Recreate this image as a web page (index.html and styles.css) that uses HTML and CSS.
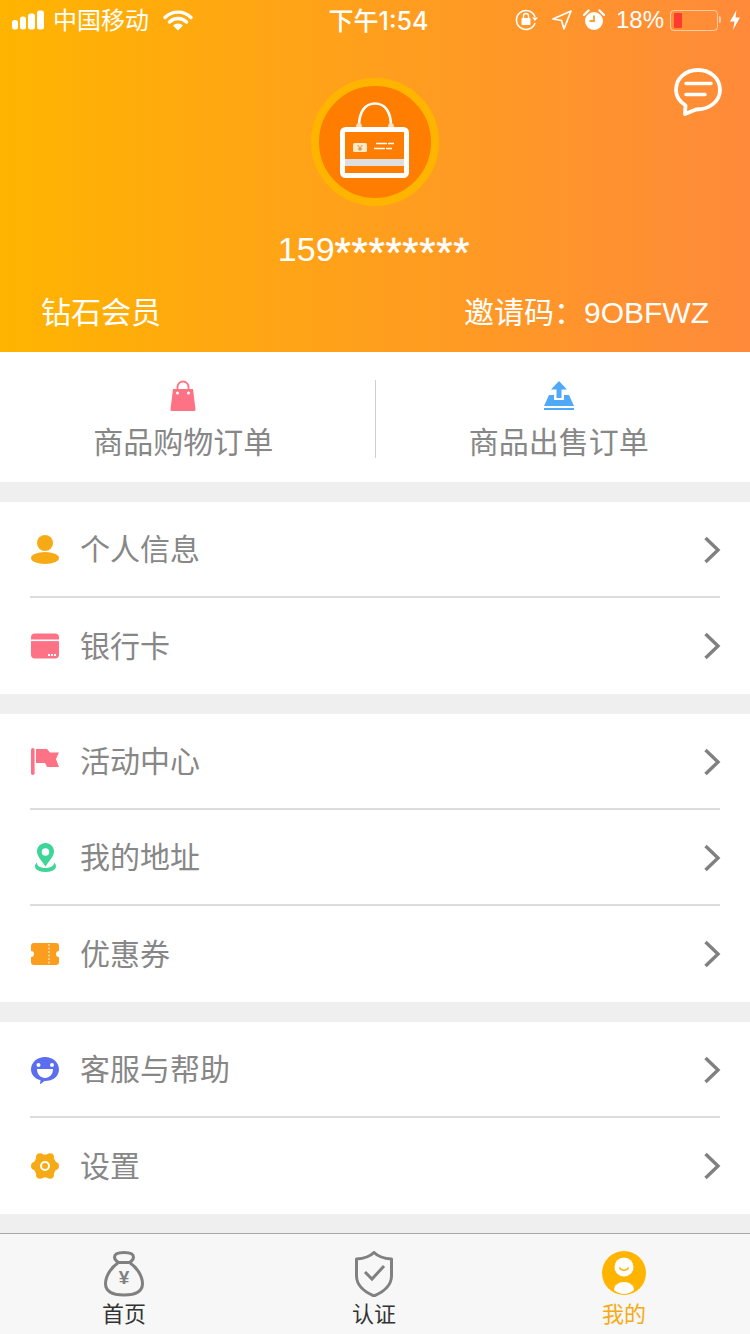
FILE: index.html
```html
<!DOCTYPE html>
<html>
<head>
    <meta charset='utf-8'>
    <title>我的</title>
    <meta name='viewport' content='width=device-width, initial-scale=1'>
    <link rel="stylesheet" href="styles.css">
</head>
<body>
    <header class="head">
        <div class="status">
            <div class="status-left">
                <svg class="signal" width="34" height="20" viewBox="0 0 34 20"><rect x="0" y="10" width="6" height="9.500" rx="2.500"/><rect x="8" y="6.500" width="6" height="13" rx="2.500"/><rect x="16" y="3.500" width="7" height="16" rx="2.500"/><rect x="25" y="0.500" width="7" height="19" rx="2.500"/></svg>
                <span>中国移动</span>
                <svg class="wifi" width="30" height="22" viewBox="0 0 30 22"><path d="M2 8.500a18.500 18.500 0 0 1 26 0M6.500 13a12 12 0 0 1 17 0" fill="none" stroke="#fff" stroke-width="3.400" stroke-linecap="round"/><path d="M10 16.500a7 7 0 0 1 10 0L15 21.500z" fill="#fff"/></svg>
            </div>
            <div class="status-time">下午1:54</div>
            <div class="status-right">
                <svg class="ic-lock" width="24" height="22" viewBox="0 0 24 22"><path d="M20 14a9.500 9.500 0 1 1 0-6" fill="none" stroke="#fff" stroke-width="1.600"/><path d="M17 8.500h6l-3 3.500z" fill="#fff"/><rect x="6.500" y="9" width="9" height="7" rx="1" fill="#fff"/><path d="M8.500 9V7a2.500 2.500 0 0 1 5 0v2" fill="none" stroke="#fff" stroke-width="1.400"/></svg>
                <svg class="ic-arrow" width="22" height="22" viewBox="0 0 22 22"><path d="M20 2 2 10l8.500 1.500L13 20z" fill="none" stroke="#fff" stroke-width="1.700" stroke-linejoin="round"/></svg>
                <svg class="ic-alarm" width="22" height="22" viewBox="0 0 22 22"><circle cx="11" cy="12" r="9" fill="#fff"/><path d="M11 6.500V12H6.500" fill="none" stroke="#fe9e28" stroke-width="1.800"/><path d="M1 6 5.500 1.500M21 6 16.500 1.500" stroke="#fff" stroke-width="2.400" stroke-linecap="round"/></svg>
                <span class="pct">18%</span>
                <div class="battery"><div class="battery-fill"></div></div>
                <svg class="bolt" width="12" height="22" viewBox="0 0 12 22"><path d="M7.500 1 1 12.500H5.500L4 21 11 8.500H6.500z" fill="#fff"/></svg>
            </div>
        </div>

        <svg class="msg-icon" width="48" height="48" viewBox="0 0 48 48"><path d="M11 46 11.500 37.500C5.500 33.500 2 28 2 22 2 10.500 11.500 2 24 2s22 8.500 22 20c0 11-10 19.500-24 19.500z" fill="none" stroke="#fff" stroke-width="3.800" stroke-linejoin="round"/><path d="M12 15.500h25" stroke="#fff" stroke-width="3.400" stroke-linecap="round"/><path d="M12 26.500h19" stroke="#fff" stroke-width="3.400" stroke-linecap="round"/></svg>

        <div class="avatar">
            <svg class="bag-card" width="70" height="76" viewBox="0 0 70 76">
                <path d="M19 24C19 10 25 1.500 35 1.500S51 10 51 24" fill="none" stroke="#fff" stroke-width="2.600"/>
                <circle cx="19" cy="24" r="2.800" fill="#ffe3c4"/><circle cx="51" cy="24" r="2.800" fill="#ffe3c4"/>
                <rect x="2.500" y="27.500" width="64" height="46" rx="3" fill="none" stroke="#fff" stroke-width="5"/>
                <rect x="5" y="57" width="59" height="7" fill="#dedede"/>
                <rect x="13" y="41" width="14" height="9" rx="1.500" fill="#ffe9c9"/>
                <text x="20" y="49" class="yen-small">¥</text>
                <path d="M36 41.500h21M34 46.500h22" stroke="#fff" stroke-width="1.500" stroke-dasharray="11 1 6"/>
            </svg>
        </div>
        <div class="phone">159<span class="stars">********</span></div>
        <div class="head-bottom">
            <span>钻石会员</span>
            <span>邀请码：9OBFWZ</span>
        </div>
    </header>

    <div class="orders">
        <div class="order">
            <svg width="26" height="32" viewBox="0 0 26 32"><path d="M7.500 11V7a5.500 5.500 0 0 1 11 0v4" fill="none" stroke="#fe7286" stroke-width="1.800"/><path d="M3 9h20l2.500 20.500a1.500 1.500 0 0 1-1.500 1.500H2a1.500 1.500 0 0 1-1.500-1.500z" fill="#fe7286"/><circle cx="7.500" cy="13" r="1.500" fill="#fff"/><circle cx="18.500" cy="13" r="1.500" fill="#fff"/></svg>
            <span>商品购物订单</span>
        </div>
        <div class="order">
            <svg width="32" height="32" viewBox="0 0 32 32"><path d="M16 1l8 8.500h-5.500V18h-5V9.500H8z" fill="#4fa9f7"/><path d="M6 15h5v5h10v-5h5l5 11H1z" fill="#4fa9f7"/><rect x="1" y="28" width="30" height="2" fill="#4fa9f7"/></svg>
            <span>商品出售订单</span>
        </div>
    </div>

    <ul class="group">
        <li class="row">
            <svg class="row-icon" width="30" height="32" viewBox="0 0 30 32"><circle cx="15" cy="10" r="8" fill="#f6ab16"/><ellipse cx="15" cy="25" rx="14" ry="6" fill="#f6ab16"/></svg>
            <span class="row-text">个人信息</span>
            <svg class="chev" width="18" height="30" viewBox="0 0 18 30"><path d="M2.500 3 15 15 2.500 27" fill="none" stroke="#808080" stroke-width="3.400"/></svg>
        </li>
        <li class="row">
            <svg class="row-icon" width="30" height="28" viewBox="0 0 30 28"><rect x="1" y="1.500" width="28" height="25" rx="4" fill="#fe7286"/><rect x="1" y="7.500" width="28" height="1.600" fill="#fff"/><path d="M18 23h2M21 23h2M24 23h2" stroke="#fff" stroke-width="1.800"/></svg>
            <span class="row-text">银行卡</span>
            <svg class="chev" width="18" height="30" viewBox="0 0 18 30"><path d="M2.500 3 15 15 2.500 27" fill="none" stroke="#808080" stroke-width="3.400"/></svg>
        </li>
    </ul>

    <ul class="group">
        <li class="row">
            <svg class="row-icon" width="30" height="30" viewBox="0 0 30 30"><rect x="1" y="2" width="3.600" height="27" rx="1.800" fill="#fe7286"/><path d="M6 3h11l3 3.500h9l-3 6.500 3 8H17l-2-4H6z" fill="#fe7286"/></svg>
            <span class="row-text">活动中心</span>
            <svg class="chev" width="18" height="30" viewBox="0 0 18 30"><path d="M2.500 3 15 15 2.500 27" fill="none" stroke="#808080" stroke-width="3.400"/></svg>
        </li>
        <li class="row">
            <svg class="row-icon" width="30" height="32" viewBox="0 0 30 32"><path d="M15.500 2C10.500 2 7 6 7 10.500c0 5 5.500 10 8.500 15 3-5 8.500-10 8.500-15C24 6 20.500 2 15.500 2z" fill="#3dd598"/><circle cx="15.500" cy="11" r="3.800" fill="#fff"/><path d="M7 21.500c-4.500 4-1.500 9.500 8.500 9.500s13-5.500 8.500-9.500c.5 3-3 5.500-8.500 5.500S6.500 24.500 7 21.500z" fill="#3dd598"/></svg>
            <span class="row-text">我的地址</span>
            <svg class="chev" width="18" height="30" viewBox="0 0 18 30"><path d="M2.500 3 15 15 2.500 27" fill="none" stroke="#808080" stroke-width="3.400"/></svg>
        </li>
        <li class="row">
            <svg class="row-icon" width="30" height="24" viewBox="0 0 30 24"><path d="M4 1h22a3 3 0 0 1 3 3v5a3 3 0 0 0 0 6v5a3 3 0 0 1-3 3H4a3 3 0 0 1-3-3v-5a3 3 0 0 0 0-6V4a3 3 0 0 1 3-3z" fill="#fb9e1e"/><path d="M19 2v20" stroke="#ffe3b8" stroke-width="1.400" stroke-dasharray="2 1.500"/></svg>
            <span class="row-text">优惠券</span>
            <svg class="chev" width="18" height="30" viewBox="0 0 18 30"><path d="M2.500 3 15 15 2.500 27" fill="none" stroke="#808080" stroke-width="3.400"/></svg>
        </li>
    </ul>

    <ul class="group">
        <li class="row">
            <svg class="row-icon" width="30" height="30" viewBox="0 0 30 30"><path d="M15 3c7.700 0 14 5.400 14 12.500S22.700 27 15 27h-.5L10 30.500 10.500 26.300C5 24.800 1 20.600 1 15.500 1 8.400 7.300 3 15 3z" fill="#5b6ef0"/><circle cx="8.500" cy="11" r="2" fill="#fff"/><circle cx="22" cy="11" r="2" fill="#fff"/><path d="M7 15h16c0 5.500-3.500 9-8 9s-8-3.500-8-9z" fill="#fff"/></svg>
            <span class="row-text">客服与帮助</span>
            <svg class="chev" width="18" height="30" viewBox="0 0 18 30"><path d="M2.500 3 15 15 2.500 27" fill="none" stroke="#808080" stroke-width="3.400"/></svg>
        </li>
        <li class="row">
            <svg class="row-icon" width="30" height="28" viewBox="0 0 30 28"><g fill="#f6ab16"><circle cx="15" cy="14" r="11.500"/><circle cx="25" cy="14" r="4"/><circle cx="20" cy="22.700" r="4"/><circle cx="10" cy="22.700" r="4"/><circle cx="5" cy="14" r="4"/><circle cx="10" cy="5.300" r="4"/><circle cx="20" cy="5.300" r="4"/></g><circle cx="15" cy="14" r="4" fill="none" stroke="#fff" stroke-width="2"/></svg>
            <span class="row-text">设置</span>
            <svg class="chev" width="18" height="30" viewBox="0 0 18 30"><path d="M2.500 3 15 15 2.500 27" fill="none" stroke="#808080" stroke-width="3.400"/></svg>
        </li>
    </ul>

    <nav class="tabs">
        <div class="tab">
            <svg width="44" height="46" viewBox="0 0 44 46"><path d="M16.500 11.500C14 10 12.500 8 12.500 6c0-3 3.500-4.500 9.500-4.500S31.500 3 31.500 6c0 2-1.500 4-4 5.500C34.500 16 40.500 25 40.500 32.500c0 8-6.500 11.500-18.500 11.500S3.500 40.500 3.500 32.500C3.500 25 9.500 16 16.500 11.500zM16.500 11.500h11" fill="none" stroke="#808080" stroke-width="3" stroke-linejoin="round"/><text x="22" y="33" class="yen-tab">¥</text></svg>
            <span>首页</span>
        </div>
        <div class="tab">
            <svg width="40" height="46" viewBox="0 0 40 46"><path d="M20 1.500c4 4 10 6 17.500 6.500v17c0 9-8 16-17.500 20C10.500 41 2.500 34 2.500 25V8C10 7.500 16 5.500 20 1.500z" fill="none" stroke="#808080" stroke-width="3" stroke-linejoin="round"/><path d="M11 21l7 7 12-13" fill="none" stroke="#808080" stroke-width="3"/></svg>
            <span>认证</span>
        </div>
        <div class="tab tab-active">
            <svg width="44" height="46" viewBox="0 0 44 46"><circle cx="22" cy="22" r="22" fill="#ffb400"/><circle cx="22" cy="16" r="9.500" fill="#fff"/><path d="M17.500 16.500a5 5 0 0 0 9 0" fill="none" stroke="#ffb400" stroke-width="1.600"/><path d="M12 39c0-5 4.500-8 10-8s10 3 10 8c-3 2.500-6.500 4-10 4s-7-1.500-10-4z" fill="#fff"/></svg>
            <span>我的</span>
        </div>
    </nav>
</body>
</html>
```

FILE: styles.css
```css
html, body {
    margin: 0;
    padding: 0;
}
body {
    width: 750px;
    height: 1334px;
    overflow: hidden;
    display: flex;
    flex-direction: column;
    background: #efefef;
    font-family: "Liberation Sans", "Noto Sans CJK SC", sans-serif;
}
ul {
    margin: 0;
    padding: 0;
    list-style: none;
}
svg {
    display: block;
    flex-shrink: 0;
}

/* header */
.head {
    position: relative;
    height: 352px;
    flex-shrink: 0;
    background: linear-gradient(90deg, #ffb400 0%, #ff8a3a 100%);
    color: #fff;
    display: flex;
    flex-direction: column;
    align-items: center;
}
.status {
    width: 100%;
    height: 40px;
    box-sizing: border-box;
    padding: 0 9px 0 12px;
    display: grid;
    grid-template-columns: 1fr auto 1fr;
    align-items: center;
    font-size: 24px;
}
.status-left {
    display: flex;
    align-items: center;
}
.status-left span {
    margin-left: 7px;
    margin-bottom: 4px;
}
.signal {
    fill: #fff;
}
.wifi {
    margin-left: 14px;
}
.status-time {
    font-family: Inter, "Noto Sans CJK SC", sans-serif;
    font-size: 25px;
    font-weight: 500;
    margin-left: 4px;
    margin-bottom: 2px;
}
.status-right {
    display: flex;
    align-items: center;
    justify-content: flex-end;
}
.ic-arrow {
    margin-left: 12px;
}
.ic-alarm {
    margin-left: 10px;
}
.pct {
    margin-left: 11px;
    font-size: 24px;
}
.battery {
    position: relative;
    width: 48px;
    height: 21px;
    margin-left: 6px;
    margin-right: 11px;
    box-sizing: border-box;
    padding: 2px 3px;
    border: 1px solid rgba(255, 255, 255, .55);
    border-radius: 4px;
}
.battery::after {
    content: "";
    position: absolute;
    left: 48px;
    top: 5px;
    width: 2px;
    height: 7px;
    border-radius: 0 2px 2px 0;
    background: rgba(255, 255, 255, .55);
}
.battery-fill {
    width: 8px;
    height: 100%;
    background: #ff3b30;
    border-radius: 1px;
}
.msg-icon {
    position: absolute;
    top: 68px;
    left: 674px;
}
.avatar {
    width: 128px;
    height: 128px;
    margin-top: 38px;
    box-sizing: border-box;
    border: 8px solid #ffb400;
    border-radius: 50%;
    background: #ff7d00;
    display: flex;
    align-items: center;
    justify-content: center;
}
.bag-card {
    margin-bottom: 5px;
}
.yen-small {
    font-size: 9px;
    fill: #c98a2a;
    text-anchor: middle;
}
.phone {
    margin-top: 25px;
    padding-right: 2px;
    height: 36px;
    font-size: 34px;
    line-height: 36px;
    white-space: nowrap;
}
.stars {
    font-size: 42px;
    line-height: 0;
    letter-spacing: .6px;
    vertical-align: -6px;
    -webkit-text-stroke: .4px #fff;
}
.head-bottom {
    width: 100%;
    box-sizing: border-box;
    margin-top: 28px;
    padding: 0 41px;
    display: flex;
    justify-content: space-between;
    font-size: 30px;
    line-height: 36px;
}

/* order links */
.orders {
    height: 130px;
    flex-shrink: 0;
    box-sizing: border-box;
    padding-top: 4px;
    background: #fff;
    display: flex;
    align-items: center;
}
.order {
    flex: 1;
    height: 78px;
    box-sizing: border-box;
    padding-right: 8px;
    display: flex;
    flex-direction: column;
    align-items: center;
    justify-content: space-between;
    font-size: 30px;
    line-height: 30px;
    color: #878787;
}
.order:first-child {
    border-right: 1px solid #cfcfcf;
}

/* menu */
.group {
    flex-shrink: 0;
    margin-top: 20px;
    background: #fff;
}
.row {
    height: 96px;
    margin: 0 30px;
    box-sizing: border-box;
    display: flex;
    align-items: center;
}
.row:not(:last-child) {
    border-bottom: 2px solid #dcdcdc;
}
.row:not(:last-child) .chev {
    margin-top: 2px;
}
.row-icon {
    width: 30px;
}
.row-text {
    flex: 1;
    margin-left: 20px;
    margin-bottom: 4px;
    font-size: 30px;
    color: #878787;
}
.chev {
    margin-right: -1px;
}

/* tab bar */
.tabs {
    margin-top: auto;
    height: 101px;
    box-sizing: border-box;
    border-top: 1px solid #a8a8a8;
    background: #f7f7f7;
    display: flex;
}
.tab {
    flex: 1;
    box-sizing: border-box;
    padding-top: 17px;
    padding-right: 2px;
    display: flex;
    flex-direction: column;
    align-items: center;
    font-size: 22px;
    line-height: 26px;
    color: #333;
}
.tab span {
    margin-top: 5px;
}
.tab-active {
    color: #f6ab16;
}
.yen-tab {
    font-size: 19px;
    font-weight: bold;
    fill: #808080;
    text-anchor: middle;
}
```
